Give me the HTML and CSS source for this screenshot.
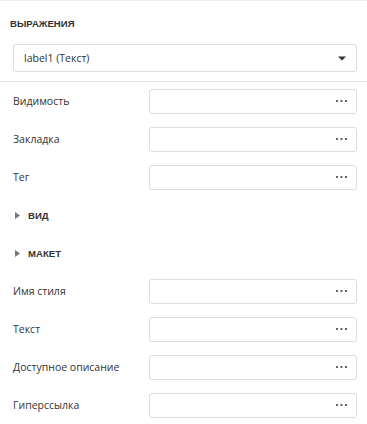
FILE: index.html
```html
<!DOCTYPE html>
<html>
<head>
<meta charset="utf-8">
<link rel="stylesheet" href="styles.css">
</head>
<body>
<div class="panel">
  <div class="section-title">ВЫРАЖЕНИЯ</div>
  <div class="select-wrap">
    <div class="select">
      <span class="select-text">label1 (Текст)</span>
      <svg class="caret" width="8" height="5" viewBox="0 0 8 5"><path d="M0 0.5h8L4 4.5z" fill="#333"/></svg>
    </div>
  </div>
  <div class="list">
    <div class="row"><span class="label">Видимость</span><div class="field"><svg class="dots" width="11" height="3" viewBox="0 0 11 3"><rect x="0" y="0" width="2" height="2" fill="#666"/><rect x="4.5" y="0" width="2" height="2" fill="#666"/><rect x="9" y="0" width="2" height="2" fill="#666"/></svg></div></div>
    <div class="row"><span class="label">Закладка</span><div class="field"><svg class="dots" width="11" height="3" viewBox="0 0 11 3"><rect x="0" y="0" width="2" height="2" fill="#666"/><rect x="4.5" y="0" width="2" height="2" fill="#666"/><rect x="9" y="0" width="2" height="2" fill="#666"/></svg></div></div>
    <div class="row"><span class="label">Тег</span><div class="field"><svg class="dots" width="11" height="3" viewBox="0 0 11 3"><rect x="0" y="0" width="2" height="2" fill="#666"/><rect x="4.5" y="0" width="2" height="2" fill="#666"/><rect x="9" y="0" width="2" height="2" fill="#666"/></svg></div></div>
    <div class="row group"><svg class="tri" width="5" height="7" viewBox="0 0 5 7"><path d="M0 0L5 3.5L0 7z" fill="#777"/></svg><span class="group-title">ВИД</span></div>
    <div class="row group"><svg class="tri" width="5" height="7" viewBox="0 0 5 7"><path d="M0 0L5 3.5L0 7z" fill="#777"/></svg><span class="group-title">МАКЕТ</span></div>
    <div class="row"><span class="label">Имя стиля</span><div class="field"><svg class="dots" width="11" height="3" viewBox="0 0 11 3"><rect x="0" y="0" width="2" height="2" fill="#666"/><rect x="4.5" y="0" width="2" height="2" fill="#666"/><rect x="9" y="0" width="2" height="2" fill="#666"/></svg></div></div>
    <div class="row"><span class="label">Текст</span><div class="field"><svg class="dots" width="11" height="3" viewBox="0 0 11 3"><rect x="0" y="0" width="2" height="2" fill="#666"/><rect x="4.5" y="0" width="2" height="2" fill="#666"/><rect x="9" y="0" width="2" height="2" fill="#666"/></svg></div></div>
    <div class="row"><span class="label">Доступное описание</span><div class="field"><svg class="dots" width="11" height="3" viewBox="0 0 11 3"><rect x="0" y="0" width="2" height="2" fill="#666"/><rect x="4.5" y="0" width="2" height="2" fill="#666"/><rect x="9" y="0" width="2" height="2" fill="#666"/></svg></div></div>
    <div class="row"><span class="label">Гиперссылка</span><div class="field"><svg class="dots" width="11" height="3" viewBox="0 0 11 3"><rect x="0" y="0" width="2" height="2" fill="#666"/><rect x="4.5" y="0" width="2" height="2" fill="#666"/><rect x="9" y="0" width="2" height="2" fill="#666"/></svg></div></div>
  </div>
</div>
</body>
</html>
```
FILE: styles.css
```css
html, body {
  margin: 0;
  padding: 0;
  background: #fff;
}
body {
  font-family: "Open Sans", "Liberation Sans", sans-serif;
  color: #333;
  width: 367px;
  height: 424px;
  overflow: hidden;
}
.panel {
  border-top: 1px solid #eeeeee;
}
.section-title {
  font-family: "Liberation Sans", Arial, sans-serif;
  font-weight: bold;
  font-size: 9.6px;
  line-height: 12px;
  color: #333;
  padding: 17px 0 0 10px;
  height: 43px;
  box-sizing: border-box;
}
.select-wrap {
  padding: 0 10px 9px 13px;
  border-bottom: 1px solid #e6e6e6;
}
.select {
  height: 28px;
  box-sizing: border-box;
  border: 1px solid #dcdcdc;
  border-radius: 3px;
  display: flex;
  align-items: center;
  justify-content: space-between;
  padding: 0 10px 0 10px;
}
.select-text {
  font-size: 10.5px;
  color: #333;
}
.caret {
  display: block;
}
.list {
  display: flex;
  flex-direction: column;
}
.row {
  height: 38px;
  display: flex;
  align-items: center;
  padding: 0 10px 0 13px;
}
.label {
  width: 136px;
  font-size: 10.5px;
  color: #333;
}
.field {
  flex: 1;
  height: 25px;
  box-sizing: border-box;
  border: 1px solid #dcdcdc;
  border-radius: 3px;
  display: flex;
  align-items: center;
  justify-content: flex-end;
  padding-right: 9px;
}
.dots {
  display: block;
}
.group {
  padding-left: 15px;
}
.tri {
  display: block;
  margin-right: 8px;
}
.group-title {
  font-family: "Liberation Sans", Arial, sans-serif;
  font-weight: bold;
  font-size: 9.6px;
  color: #333;
}
```
